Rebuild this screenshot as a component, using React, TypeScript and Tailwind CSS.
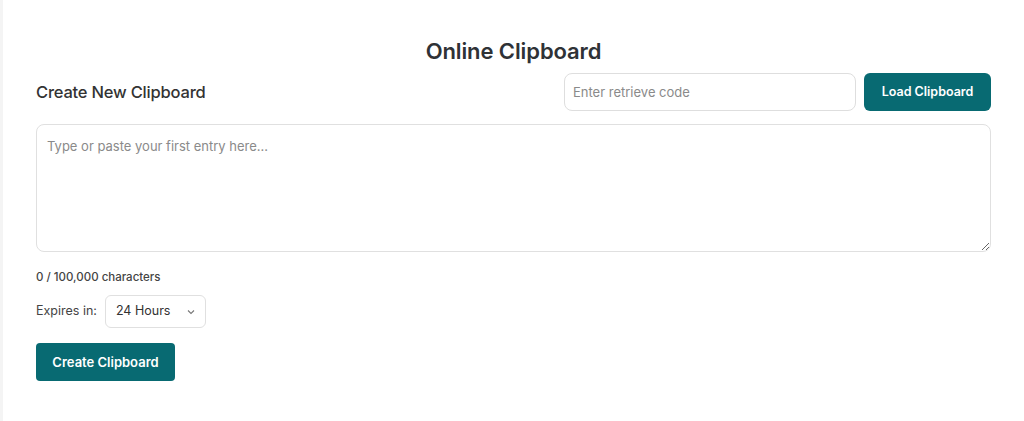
import React from "react";

export default function App() {
  return (
    <div
      className="w-[1024px] h-[421px] bg-white border-l-[3px] border-[#f4f4f4] text-[#333] overflow-hidden"
      style={{ fontFamily: "Inter, 'Noto Sans', sans-serif" }}
    >
      <div className="pl-[33px] pr-[33px] pt-[36px]">
        <h1 className="text-center text-[22px] leading-[30px] font-semibold text-[#2f3236] tracking-[-0.1px]">
          Online Clipboard
        </h1>
        <div className="mt-[7px] flex items-center justify-between">
          <h2 className="text-[16.5px] font-medium text-[#333] tracking-[-0.2px]">Create New Clipboard</h2>
          <div className="flex items-center gap-[8px]">
            <input
              placeholder="Enter retrieve code"
              className="w-[292px] h-[38px] rounded-[8px] border border-[#dedede] px-[8px] text-[13px] text-[#333] placeholder:text-[#8a8a8a] outline-none"
            />
            <button className="h-[38px] w-[127px] rounded-[6px] bg-[#086a72] text-white text-[12.5px] font-semibold">
              Load Clipboard
            </button>
          </div>
        </div>
        <textarea
          placeholder="Type or paste your first entry here..."
          className="mt-[13px] block w-full h-[128px] rounded-[8px] border border-[#e0e0e0] px-[10px] py-[12px] text-[13px] placeholder:text-[#8a8a8a] outline-none resize-y"
        />
        <p className="mt-[17px] text-[11.5px] font-medium text-[#444]">0 / 100,000 characters</p>
        <div className="mt-[9px] flex items-center gap-[8px]">
          <span className="text-[12.5px] text-[#444]">Expires in:</span>
          <div className="relative w-[101px] h-[33px] rounded-[6px] border border-[#e0e0e0] flex items-center px-[10px]">
            <span className="text-[12.5px] text-[#333]">24 Hours</span>
            <svg
              className="absolute right-[10px] top-[13px]"
              width="8"
              height="6"
              viewBox="0 0 8 6"
              fill="none"
              stroke="#777"
              strokeWidth="1.1"
            >
              <path d="M1 1.5 L4 4.5 L7 1.5" />
            </svg>
          </div>
        </div>
        <button className="mt-[15px] h-[38px] w-[139px] rounded-[4px] bg-[#086a72] text-white text-[13px] font-semibold">
          Create Clipboard
        </button>
      </div>
    </div>
  );
}
